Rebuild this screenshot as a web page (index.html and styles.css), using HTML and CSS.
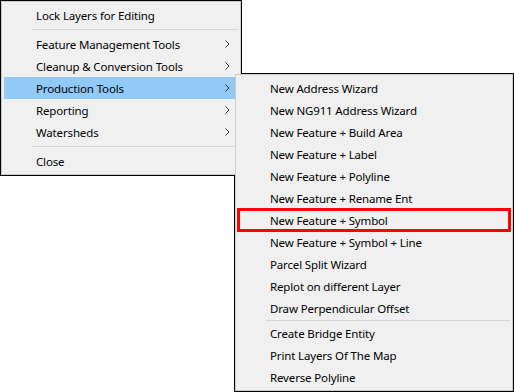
FILE: index.html
```html
<!DOCTYPE html>
<html>
<head>
<meta charset="utf-8">
<link rel="stylesheet" href="styles.css">
</head>
<body>
<div class="canvas">
  <div class="menu main-menu">
    <ul class="panel">
      <li class="item">Lock Layers for Editing</li>
      <li class="sep"></li>
      <li class="item has-sub">Feature Management Tools<svg class="chev" width="5" height="8" viewBox="0 0 5 8"><path d="M0.5 0.5 L4 4 L0.5 7.5" fill="none" stroke="#333" stroke-width="1"/></svg></li>
      <li class="item has-sub">Cleanup &amp; Conversion Tools<svg class="chev" width="5" height="8" viewBox="0 0 5 8"><path d="M0.5 0.5 L4 4 L0.5 7.5" fill="none" stroke="#333" stroke-width="1"/></svg></li>
      <li class="item has-sub active">Production Tools<svg class="chev" width="5" height="8" viewBox="0 0 5 8"><path d="M0.5 0.5 L4 4 L0.5 7.5" fill="none" stroke="#333" stroke-width="1"/></svg></li>
      <li class="item has-sub">Reporting<svg class="chev" width="5" height="8" viewBox="0 0 5 8"><path d="M0.5 0.5 L4 4 L0.5 7.5" fill="none" stroke="#333" stroke-width="1"/></svg></li>
      <li class="item has-sub">Watersheds<svg class="chev" width="5" height="8" viewBox="0 0 5 8"><path d="M0.5 0.5 L4 4 L0.5 7.5" fill="none" stroke="#333" stroke-width="1"/></svg></li>
      <li class="sep"></li>
      <li class="item">Close</li>
    </ul>
  </div>
  <div class="menu sub-menu">
    <ul class="panel">
      <li class="item">New Address Wizard</li>
      <li class="item">New NG911 Address Wizard</li>
      <li class="item">New Feature + Build Area</li>
      <li class="item">New Feature + Label</li>
      <li class="item">New Feature + Polyline</li>
      <li class="item">New Feature + Rename Ent</li>
      <li class="item marked">New Feature + Symbol<span class="callout"></span></li>
      <li class="item">New Feature + Symbol + Line</li>
      <li class="item">Parcel Split Wizard</li>
      <li class="item">Replot on different Layer</li>
      <li class="item">Draw Perpendicular Offset</li>
      <li class="sep sep-tight"></li>
      <li class="item">Create Bridge Entity</li>
      <li class="item">Print Layers Of The Map</li>
      <li class="item">Reverse Polyline</li>
    </ul>
  </div>
</div>
</body>
</html>
```

FILE: styles.css
```css
html, body {
  margin: 0;
  padding: 0;
  background: #ffffff;
}

.canvas {
  position: relative;
  width: 514px;
  height: 392px;
  overflow: hidden;
  font-family: "Noto Sans", "Open Sans", sans-serif;
  font-size: 11.5px;
  letter-spacing: -0.15px;
  color: #000;
}

.menu {
  position: absolute;
  border: 1px solid #000;
  box-sizing: border-box;
}

.main-menu {
  left: 0;
  top: 0;
  width: 242px;
}

.sub-menu {
  left: 234px;
  top: 73px;
  width: 280px;
}

.panel {
  position: relative;
  z-index: 2;
  list-style: none;
  margin: 0;
  padding: 2px;
  background: #f0f0f0;
  border: 1px solid #cccccc;
}

.sub-menu .panel {
  z-index: 3;
}

.item {
  position: relative;
  display: flex;
  align-items: center;
  height: 22px;
  padding-left: 32px;
  white-space: nowrap;
}

.item.active {
  background: #91c9f7;
}

.chev {
  position: absolute;
  right: 8px;
  top: 7px;
}

.sep {
  height: 7px;
  display: flex;
  align-items: center;
  padding-left: 28px;
}

.sep::before {
  content: "";
  display: block;
  flex: 1;
  height: 1px;
  background: #d7d7d7;
}

.sep-tight {
  height: 3px;
}

.callout {
  position: absolute;
  left: -1px;
  right: -1px;
  top: -1px;
  bottom: -1px;
  border: 3px solid #ff0000;
}
```
